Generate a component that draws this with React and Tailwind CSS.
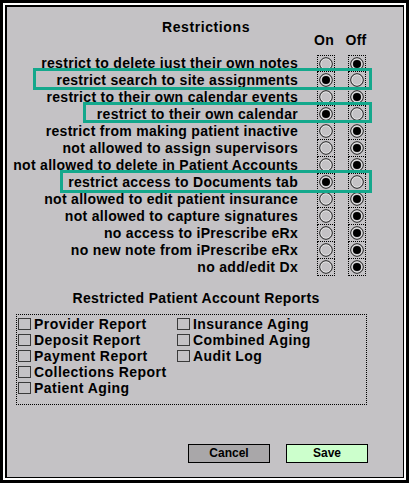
import React from 'react';

const restrictions = [
  { label: 'restrict to delete just their own notes', on: false },
  { label: 'restrict search to site assignments', on: true },
  { label: 'restrict to their own calendar events', on: false },
  { label: 'restrict to their own calendar', on: true },
  { label: 'restrict from making patient inactive', on: false },
  { label: 'not allowed to assign supervisors', on: false },
  { label: 'not allowed to delete in Patient Accounts', on: false },
  { label: 'restrict access to Documents tab', on: true },
  { label: 'not allowed to edit patient insurance', on: false },
  { label: 'not allowed to capture signatures', on: false },
  { label: 'no access to iPrescribe eRx', on: false },
  { label: 'no new note from iPrescribe eRx', on: false },
  { label: 'no add/edit Dx', on: false },
];

const reportsLeft = ['Provider Report', 'Deposit Report', 'Payment Report', 'Collections Report', 'Patient Aging'];
const reportsRight = ['Insurance Aging', 'Combined Aging', 'Audit Log'];

const Radio = ({ checked }) => (
  <svg width="14" height="14" viewBox="0 0 14 14">
    <circle cx="7" cy="7" r="6.2" fill="none" stroke="#000" strokeWidth="1" />
    <circle cx="7" cy="7" r="5.2" fill="none" stroke="#ececec" strokeWidth="0.8" />
    {checked && <circle cx="7" cy="7" r="4" fill="#000" />}
  </svg>
);

const Cell = ({ checked, first }) => (
  <div
    className={`w-[18px] h-[17px] flex items-center justify-center border-x border-b border-dotted border-black ${first ? 'border-t' : ''}`}
  >
    <Radio checked={checked} />
  </div>
);

const Check = ({ label }) => (
  <div className="flex items-center h-4">
    <div className="w-[13px] h-[12px] border border-[#3a3a3a] mr-[3px]" />
    <span className="tracking-[0.45px]">{label}</span>
  </div>
);

export default function App() {
  return (
    <div
      className="relative w-[409px] h-[483px] bg-black p-[3px] text-black font-bold text-[14px]"
      style={{ fontFamily: '"Liberation Sans", Arial, sans-serif' }}
    >
      <div className="w-full h-full border-2 border-white">
        <div className="w-full h-full border-t-2 border-l-2 border-r border-b border-black bg-[#c4c2c5] flex flex-col">
          {/* Restrictions */}
          <div className="text-center mt-[12px] leading-4 pl-[2px] tracking-[0.6px]">Restrictions</div>
          <div className="flex h-[15px] leading-[15px] mt-[-2px] tracking-[0.3px]">
            <div className="w-[306px]" />
            <div className="w-[22px] text-center">On</div>
            <div className="w-[9px]" />
            <div className="w-[24px] text-center">Off</div>
          </div>
          <div className="flex flex-col mt-[7px]">
            {restrictions.map((r, i) => (
              <div key={r.label} className="flex items-stretch h-[17px]">
                <div className="w-[291px] text-right leading-[17px] whitespace-nowrap tracking-[0.3px]">{r.label}</div>
                <div className="w-[19px]" />
                <Cell checked={r.on} first={i === 0} />
                <div className="w-[13px]" />
                <Cell checked={!r.on} first={i === 0} />
              </div>
            ))}
          </div>

          {/* Reports */}
          <div className="text-center mt-[14px] leading-4 pr-[18px] tracking-[0.35px]">Restricted Patient Account Reports</div>
          <div className="ml-[9px] mt-[8px] w-[351px] h-[91px] border border-dotted border-black flex pl-[1px] pt-[1px]">
            <div className="w-[159px] flex flex-col">
              {reportsLeft.map((l) => (
                <Check key={l} label={l} />
              ))}
            </div>
            <div className="flex flex-col">
              {reportsRight.map((l) => (
                <Check key={l} label={l} />
              ))}
            </div>
          </div>

          {/* Buttons */}
          <div className="flex mt-[39px] ml-[181px] gap-4 text-[12px]">
            <button className="w-[82px] h-[19px] border border-black bg-[#a9a7a9] leading-[17px]">Cancel</button>
            <button className="w-[82px] h-[19px] border border-black bg-[#ccffcc] leading-[17px]">Save</button>
          </div>
        </div>
      </div>

      {/* annotation highlights */}
      <div className="absolute left-[33px] top-[68px] w-[339px] h-[22px] border-[3px] border-[#14a88c]" />
      <div className="absolute left-[83px] top-[102px] w-[289px] h-[21px] border-[3px] border-[#14a88c]" />
      <div className="absolute left-[60px] top-[170px] w-[312px] h-[23px] border-[3px] border-[#14a88c]" />
    </div>
  );
}
